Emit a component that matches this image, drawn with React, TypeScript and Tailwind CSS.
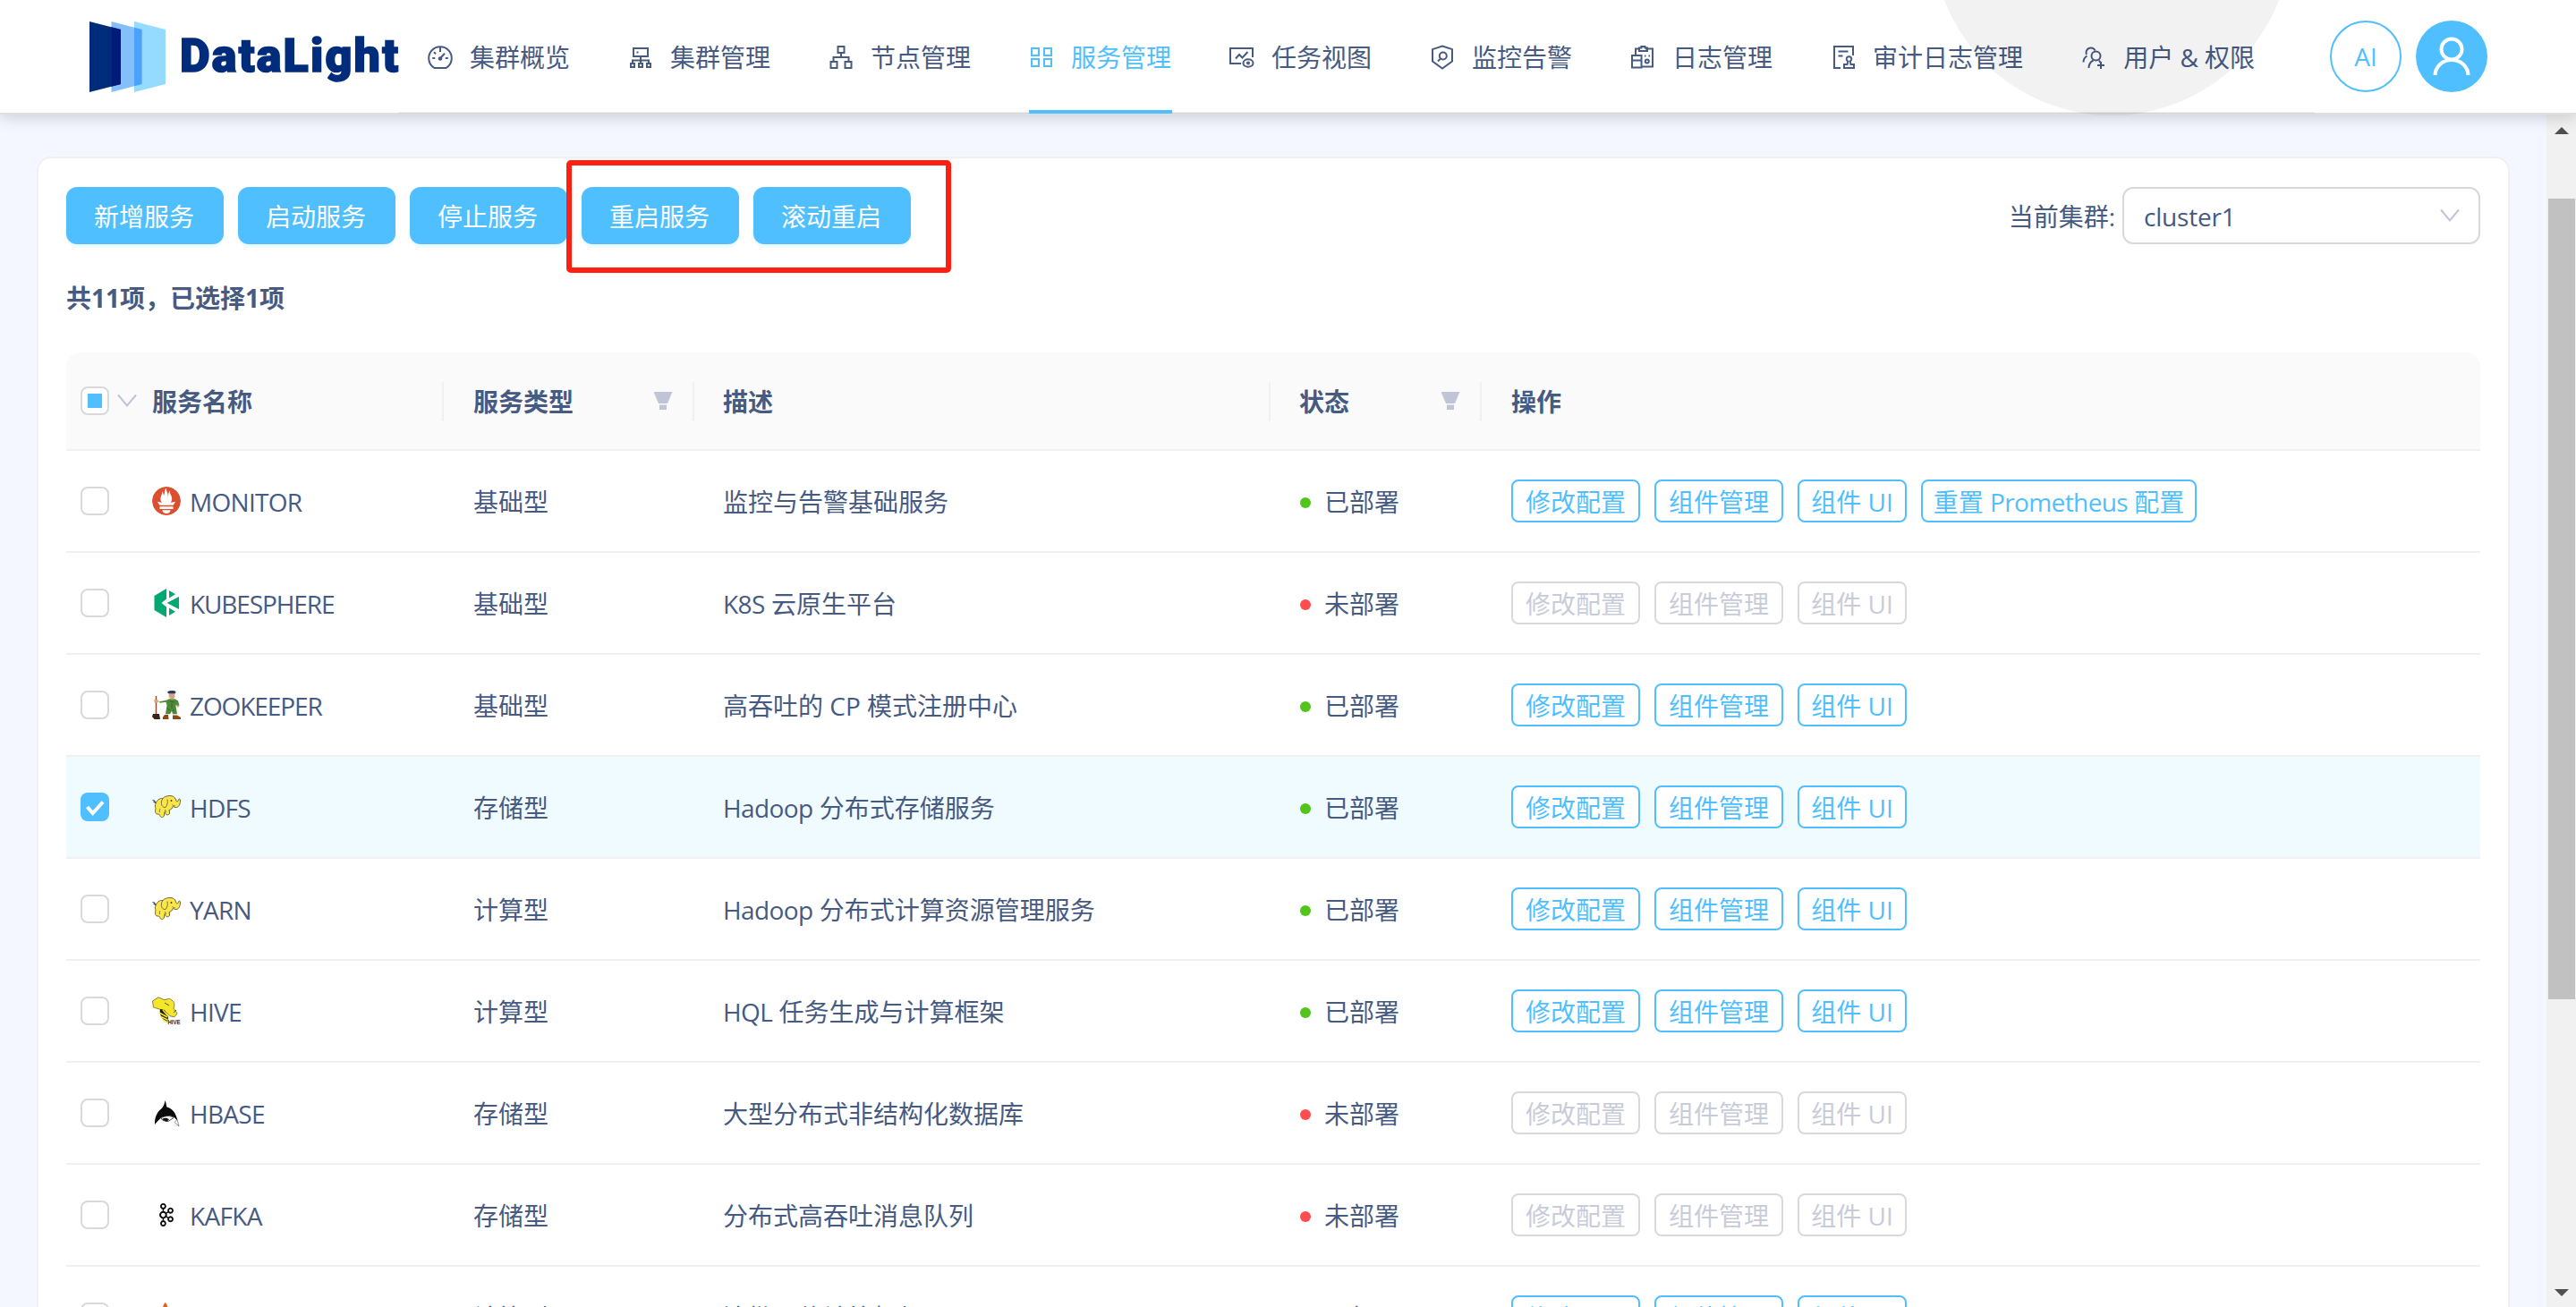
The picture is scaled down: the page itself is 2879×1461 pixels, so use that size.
import React from 'react';
import { SiApachekafka, SiPrometheus } from 'react-icons/si';

type IconProps = { children: React.ReactNode };

function NavIcon({ children }: IconProps) {
  return (
    <svg width="28" height="28" viewBox="0 0 28 28" fill="none" stroke="currentColor" strokeWidth="2" className="block shrink-0 overflow-visible">
      {children}
    </svg>
  );
}

const icons = {
  gauge: (
    <NavIcon>
      <path d="M7.500 26C3.500 23.500 1.200 19.500 1.200 15a12.800 12.800 0 0 1 25.600 0c0 4.500-2.300 8.500-6.300 11z" />
      <path d="M14 3v5M5.200 15h3M19.800 15h3M7 8.200l2 2M13.500 15.700l5.500-6" />
      <circle cx="14" cy="15.500" r="1.300" fill="currentColor" />
    </NavIcon>
  ),
  cluster: (
    <NavIcon>
      <path d="M6 4h16v9H6zM14 13v9M5 22v-4.500h18V22M9.500 8.500h2M3 21h4v4H3zM12 21h4v4h-4zM21 21h4v4h-4z" />
    </NavIcon>
  ),
  node: (
    <NavIcon>
      <path d="M10.500 2h7v7h-7zM14 9v5M5.500 19v-5h17v5M2.500 19h7v7h-7zM18.500 19h7v7h-7z" />
    </NavIcon>
  ),
  grid: (
    <NavIcon>
      <path d="M3 4h8v8H3zM17 4h8v8h-8zM3 16h8v8H3zM17 16h8v8h-8z" />
    </NavIcon>
  ),
  task: (
    <NavIcon>
      <path d="M26 14V4H1v17h12" />
      <path d="M7 15.500l4-4.500 3.500 3.500 6-6.500" />
      <ellipse cx="21" cy="20.500" rx="5.500" ry="4.300" />
      <circle cx="21" cy="20.500" r="1" fill="currentColor" />
    </NavIcon>
  ),
  shield: (
    <NavIcon>
      <path d="M14 1.500l11 3.600v13.400L14 26.500 3 18.500V5.100z" />
      <circle cx="14.800" cy="12.500" r="4" />
      <path d="M12 15.500l-3 3" />
    </NavIcon>
  ),
  log: (
    <NavIcon>
      <path d="M6 11V4.500h4M17 4.500h8V24.500h-13M10 3.500h2.500V2h4v1.500H19V7h-9zM2 12h10.500v13.500H2zM2 17.500h10.500M16 12.500h1.500M20.500 12.500h1.500" />
      <circle cx="18.800" cy="18.500" r="2" />
    </NavIcon>
  ),
  audit: (
    <NavIcon>
      <path d="M25 12V2H4v24h7M8.500 7.500h11M8.500 12.500h5" />
      <path d="M15 26h11v-4h-3.500l-.8-3.500a2.800 2.800 0 1 0-2.400 0L18.500 22H15z" />
    </NavIcon>
  ),
  users: (
    <NavIcon>
      <circle cx="16.500" cy="12.500" r="5" />
      <path d="M8.500 26c0-4.500 2-7 5-8.500M6 11a5 5 0 1 1 9.500-4.500M2.500 19.500c0-3 1.500-5.500 4-7M20 17.500l1.500 2.500M18 23h8M22 19v8" />
    </NavIcon>
  ),
};

const navItems: { label: string; icon: React.ReactNode; active?: boolean }[] = [
  { label: '集群概览', icon: icons.gauge },
  { label: '集群管理', icon: icons.cluster },
  { label: '节点管理', icon: icons.node },
  { label: '服务管理', icon: icons.grid, active: true },
  { label: '任务视图', icon: icons.task },
  { label: '监控告警', icon: icons.shield },
  { label: '日志管理', icon: icons.log },
  { label: '审计日志管理', icon: icons.audit },
  { label: '用户 & 权限', icon: icons.users },
];

function Logo() {
  return (
    <div className="flex w-[446px] shrink-0 items-center pl-[100px]">
      <svg width="85" height="79" viewBox="0 0 85 79" className="block shrink-0">
        <path d="M50 0l35 9v61L50 79z" fill="#95daff" />
        <path d="M24.500 0l34 9v61l-34 9z" fill="#82bffb" />
        <path d="M50 6.700l8.500 2.300v61L50 72.300z" fill="#4ba2fc" />
        <path d="M0 0l35 9v61L0 79z" fill="#002c7b" />
        <path d="M24.500 6.300L35 9v61l-10.500 2.700z" fill="#001c78" />
      </svg>
      <span className="ml-4 font-[Roboto] text-[52px] leading-none font-black tracking-[2.2px] text-[#002c7b] [-webkit-text-stroke:1.6px_#002c7b]">
        DataLight
      </span>
    </div>
  );
}

function Header() {
  return (
    <header className="relative z-10 flex h-32 shrink-0 border-b-2 border-[#dfdfdf] bg-white shadow-[0_4px_16px_rgba(0,0,0,0.16)]">
      <Logo />
      <nav className="flex h-[127px] w-[2140px] shrink-0 gap-16 border-b-2 border-black/5 pl-8">
        {navItems.map((n) => (
          <div
            key={n.label}
            className={
              n.active
                ? 'flex h-[127px] shrink-0 items-center gap-5 border-b-4 border-[#50bfff] pt-1 text-[#50bfff]'
                : 'flex h-[127px] shrink-0 items-center gap-5 border-b-4 border-transparent pt-1'
            }
          >
            {n.icon}
            <span className="mr-px -ml-px whitespace-nowrap">{n.label}</span>
          </div>
        ))}
      </nav>
      <div className="ml-[18px] flex items-center gap-4">
        <div className="flex size-20 items-center justify-center rounded-full border-2 border-[#50bfff] text-[#50bfff]">AI</div>
        <div className="flex size-20 items-center justify-center rounded-full bg-[#50bfff]">
          <svg width="80" height="80" viewBox="0 0 80 80" fill="none" stroke="#fff" strokeWidth="4">
            <circle cx="40" cy="32" r="11.500" />
            <path d="M21.500 61a18.500 17 0 0 1 37 0" />
          </svg>
        </div>
      </div>
      <div className="pointer-events-none absolute top-0 left-[2160px] h-[129px] w-[400px] overflow-hidden">
        <div className="absolute bottom-0 left-0 size-[400px] rounded-full bg-black/5" />
      </div>
    </header>
  );
}

function Checkbox({ checked }: { checked?: boolean }) {
  if (checked)
    return (
      <span className="flex size-8 items-center justify-center rounded-lg bg-[#50bfff]">
        <svg width="32" height="32" viewBox="0 0 32 32" fill="none" stroke="#fff" strokeWidth="4">
          <path d="M7.500 16l6.200 7L25 10.500" />
        </svg>
      </span>
    );
  return <span className="size-8 rounded-lg border-2 border-[#d9d9d9] bg-white" />;
}

function Chevron() {
  return (
    <svg width="22" height="16" viewBox="0 0 22 16" fill="none" stroke="#bfc5d6" strokeWidth="2" className="block shrink-0">
      <path d="M1 1.500l10 12 10-12" />
    </svg>
  );
}

function FilterIcon() {
  return (
    <svg width="22" height="20" viewBox="0 0 22 20" fill="#bfc5d6" className="mb-0.5 block shrink-0">
      <path d="M.5 0h21L16 13H6zM7 14.500h8V20H7z" />
    </svg>
  );
}

function Elephant() {
  return (
    <svg width="32" height="32" viewBox="0 0 32 32">
      <path
        d="M4 12.500C5 8.500 8.500 6 12 6.500 13.500 4.500 17 3.500 20 3.500c3.500 0 5.500 1.500 6.500 4.500.5 1.500 1 2.500 2 2 .8-.5.500-2 1.500-2.800.8-.5 1.500.3 1.500 1.800 0 3.500-1.500 7-4 7.500-2 .3-3.500-1-4.500-1-.5 2-1.500 3.500-4 4l.5 2.500c.3 1.500-.5 2.500-2 2.800-1.500.3-2.500-.8-3-2.300l-.5-1-.5 3.500c-.3 2-1.500 2.800-3 2.500-1-.3-1.500-1-1.800-2L7.500 24c-2 .5-3.500-.5-4-2.500-.3-1.500.5-2.500.5-4-.8-1.500-1-3.500 0-5z"
        fill="#fbe64a"
        stroke="#6a6440"
        strokeWidth="1"
      />
      <path
        d="M12 6.500c-1.500 2-2.500 5-1 8 1 1.500 2.500 2.500 4 2 1.500-2 3-4.500 2-9M8.500 22c-.5-2 0-3 .5-4M15.500 22l-1-3M22.500 13.500c1 1 2 1.500 3 1"
        fill="none"
        stroke="#6a6440"
        strokeWidth="0.900"
      />
      <path d="M.5 8.500l2 .5 1.500 3M1.500 10.500l2 .5" fill="none" stroke="#444" strokeWidth="1.200" />
      <circle cx="21.500" cy="9" r="0.900" fill="#333" />
    </svg>
  );
}

function Monitor() {
  return <SiPrometheus size={32} color="#db4f31" className="rounded-full bg-white" />;
}

function KubeSphere() {
  return (
    <svg width="32" height="32" viewBox="0 0 32 32" fill="#00a971">
      <path d="M16 0v11.500L10.500 16l5.500 4.500V32L2.500 24V8z" />
      <path d="M19 2l7 4.200-7 4.300zM30 9v14L16.500 16zM19 21.500l7 4.300-7 4.200z" />
    </svg>
  );
}

function ZooKeeper() {
  return (
    <svg width="32" height="32" viewBox="0 0 32 32">
      <path d="M4.500 6v20" stroke="#8a5230" strokeWidth="1.500" />
      <path d="M1 26h7l1 6H2.500L0 29z" fill="#3a2218" />
      <path d="M2 10.500l4-.5 2 2.500-5 1.500z" fill="#e0a477" />
      <path d="M8 12.300l8-1.500 3-1.500h6l4 2 1.500 5.500-2.500 1.500-1-3-.5 2 1.500 9h-5l-1-3.500-2 3.500h-5l1.500-10-1-3.500-7 1z" fill="#4f8a3a" />
      <path d="M19 2.500h6l.5 4.500-2 2.500h-2.500L18.500 6.500z" fill="#d9a27c" />
      <path d="M17 1.500C19-.3 25-.3 26.500 1L26 3.200h-8z" fill="#27405f" />
      <path d="M14 27h4l.5 5h-6.500v-2.500zM23 27.500h5l4 2.500v2h-9z" fill="#8c4a12" />
      <path d="M22 14v6M20 12l5 1M17 20l3 2M25 21l-2 2" stroke="#2f6326" strokeWidth="1" />
      <path d="M27.500 16.500l3 0-1.500 2.500z" fill="#e0a477" />
    </svg>
  );
}

function Hive() {
  return (
    <svg width="32" height="32" viewBox="0 0 32 32" className="overflow-visible">
      <path
        d="M.5 5L7 .8l7 3 4.500-1.500c2 0 3 1.500 4.500 2.500 2.500 2 2 6 1 8.500l4 5.500-3 4-5-1-4-4-7-3.500L1.500 12z"
        fill="#f5e52c"
        stroke="#6b6a20"
        strokeWidth="0.800"
      />
      <path d="M9 14l5 1 4 8-1 6-4-3c-3-3-5-7-4-12z" fill="#1b1a0c" />
      <path d="M8 18l9 5M9 22l8 4M12 15l5 6M12 26l5 2.500" stroke="#f5e52c" strokeWidth="1.500" />
      <path d="M14 7l5 3M24 18l3-3" stroke="#5b5a18" strokeWidth="1" />
      <text x="17.500" y="31" fontSize="8" fontWeight="900" fontFamily="Liberation Sans" textLength="14" lengthAdjust="spacingAndGlyphs" fill="#2c2a10">
        HIVE
      </text>
    </svg>
  );
}

function HBase() {
  return (
    <svg width="32" height="32" viewBox="0 0 32 32">
      <path
        d="M14.500 2c1.500 3 1 5.500 2 7.500 6.500 1.500 10.500 7.500 12 15.500l-2-2c-1-2-5-3.500-8-4l-8 2-5 5-2.500 3C2.500 22 5.500 15.500 9 12.500c3-2 4.500-5 5.500-10.500z"
        fill="#0b0b0b"
      />
      <path d="M10 22c4-3 10-3.500 14-.5l-6 4-6-1z" fill="#fff" stroke="#222" strokeWidth="0.800" />
      <path d="M11 23c3-2 6-1.500 8 .5l-3 2.500z" fill="#111" />
      <path d="M25 26.500l3-3 2 7.500-2-2z" fill="#fff" stroke="#777" strokeWidth="0.800" />
    </svg>
  );
}

function Kafka() {
  return <SiApachekafka size={26} color="#0b0b0b" className="m-[3px]" />;
}

function Spark() {
  return (
    <svg width="32" height="32" viewBox="0 0 32 32" fill="#e8601c">
      <path d="M14.500 0c2 1 3 5 3.500 9l9-3-4 9 5 8-9-2-6 8-2-10-8-4 8-4c.5-4 1.500-9 3.500-11z" />
    </svg>
  );
}

type Service = { name: string; type: string; desc: string; up: boolean; icon: React.ReactNode; checked?: boolean; reset?: boolean };

const services: Service[] = [
  { name: 'MONITOR', type: '基础型', desc: '监控与告警基础服务', up: true, icon: <Monitor />, reset: true },
  { name: 'KUBESPHERE', type: '基础型', desc: 'K8S 云原生平台', up: false, icon: <KubeSphere /> },
  { name: 'ZOOKEEPER', type: '基础型', desc: '高吞吐的 CP 模式注册中心', up: true, icon: <ZooKeeper /> },
  { name: 'HDFS', type: '存储型', desc: 'Hadoop 分布式存储服务', up: true, icon: <Elephant />, checked: true },
  { name: 'YARN', type: '计算型', desc: 'Hadoop 分布式计算资源管理服务', up: true, icon: <Elephant /> },
  { name: 'HIVE', type: '计算型', desc: 'HQL 任务生成与计算框架', up: true, icon: <Hive /> },
  { name: 'HBASE', type: '存储型', desc: '大型分布式非结构化数据库', up: false, icon: <HBase /> },
  { name: 'KAFKA', type: '存储型', desc: '分布式高吞吐消息队列', up: false, icon: <Kafka /> },
  { name: 'SPARK', type: '计算型', desc: '流批一体计算框架', up: true, icon: <Spark /> },
];

/** Sets Latin runs slightly tighter than the surrounding Chinese text. */
function Mixed({ text }: { text: string }) {
  return (
    <span className="whitespace-pre">
      {text.split(/([A-Za-z0-9]{3,})/).map((part, i) =>
        i % 2 ? (
          <span key={i} className="tracking-[-0.6px]">
            {part}
          </span>
        ) : (
          part
        ),
      )}
    </span>
  );
}

const COLS = 'grid grid-cols-[64px_358px_280px_644px_236px_1fr]';

function TableHead() {
  const cell = 'relative flex h-full items-center justify-between pr-6 pl-8 pt-0.5';
  const bar = 'h-11 w-0.5 absolute right-0 bg-[#f0f0f0]';
  return (
    <div className={`${COLS} h-[110px] items-center rounded-t-2xl border-b-2 border-[#f0f0f0] bg-[#fafafa] font-bold`}>
      <div className="flex items-center gap-[9px] pl-4">
        <span className="flex size-8 shrink-0 items-center justify-center rounded-lg border-2 border-[#d9d9d9] bg-white">
          <span className="size-4 bg-[#50bfff]" />
        </span>
        <Chevron />
      </div>
      <div className={cell}>
        服务名称
        <span className={bar} />
      </div>
      <div className={cell}>
        <span className="pl-px">服务类型</span>
        <FilterIcon />
        <span className={bar} />
      </div>
      <div className={cell}>
        描述
        <span className={bar} />
      </div>
      <div className={cell}>
        状态
        <FilterIcon />
        <span className={bar} />
      </div>
      <div className={cell}>
        <span className="pl-px">操作</span>
      </div>
    </div>
  );
}

function Action({ label, width, up }: { label: string; width: string; up: boolean }) {
  return (
    <span
      className={`${width} ${
        up ? 'border-[#50bfff] text-[#50bfff]' : 'border-[#d9d9d9] text-[#c8ccd9]'
      } flex h-12 items-center justify-center rounded-lg border-2 bg-white pt-0.5 whitespace-nowrap`}
    >
      <Mixed text={label} />
    </span>
  );
}

function Row({ s }: { s: Service }) {
  return (
    <div className={`${COLS} h-[114px] shrink-0 items-center border-b-2 border-[#f0f0f0] ${s.checked ? 'bg-[#f0fbff]' : ''}`}>
      <div className="flex pl-4">
        <Checkbox checked={s.checked} />
      </div>
      <div className="flex items-center gap-2 pl-8">
        <span className="size-8 shrink-0">{s.icon}</span>
        <span className={s.name.length > 8 ? 'pt-0.5 pl-0.5 tracking-[-1.1px]' : 'pt-0.5 pl-0.5 tracking-[-0.7px]'}>{s.name}</span>
      </div>
      <div className="pt-0.5 pl-[33px]">{s.type}</div>
      <div className="pt-0.5 pl-8">
        <Mixed text={s.desc} />
      </div>
      <div className="flex items-center gap-[15px] pt-0.5 pl-[33px]">
        <span className={s.up ? 'mt-0.5 size-3 rounded-full bg-[#52c41a]' : 'mt-0.5 size-3 rounded-full bg-[#ff4d4f]'} />
        {s.up ? '已部署' : '未部署'}
      </div>
      <div className="flex gap-4 pl-[33px]">
        <Action label="修改配置" width="w-36" up={s.up} />
        <Action label="组件管理" width="w-36" up={s.up} />
        <Action label="组件 UI" width="w-[122px]" up={s.up} />
        {s.reset && <Action label="重置 Prometheus 配置" width="w-[308px]" up={s.up} />}
      </div>
    </div>
  );
}

const toolbar = ['新增服务', '启动服务', '停止服务', '重启服务', '滚动重启'];

export default function App() {
  return (
    <div className="flex h-[1461px] w-[2879px] flex-col overflow-hidden bg-[#f4f7ff] font-['Open_Sans','Noto_Sans_CJK_SC',sans-serif] text-[28px] leading-[44px] text-[#465a82]">
      <Header />
      <div className="flex min-h-0 flex-1">
        <main className="min-w-0 flex-1 overflow-hidden pt-[47px] pr-[41px] pl-[41px]">
          <section className="relative h-[1500px] rounded-2xl border-2 border-[#f0f0f0] bg-white px-[31px] pt-8">
            <div className="flex h-16 items-center justify-between">
              <div className="flex gap-4">
                {toolbar.map((t) => (
                  <button key={t} className="h-16 w-44 rounded-xl bg-[#50bfff] pt-0.5 pr-0.5 text-white shadow-[0_4px_0_#f0fbff]">
                    {t}
                  </button>
                ))}
              </div>
              <div className="flex items-center gap-2">
                <span className="pt-0.5">当前集群:</span>
                <div className="flex h-16 w-[400px] items-center justify-between rounded-xl border-2 border-[#d9d9d9] pr-[21px] pl-[22px]">
                  <span className="pt-0.5 tracking-[-0.2px]">cluster1</span>
                  <Chevron />
                </div>
              </div>
            </div>
            <div className="mt-[38px] h-11 font-bold">共11项，已选择1项</div>
            <div className="mt-[39px]">
              <TableHead />
              {services.map((s) => (
                <Row key={s.name} s={s} />
              ))}
            </div>
            <div className="pointer-events-none absolute top-[2px] left-[590px] h-[126px] w-[430px] rounded-[5px] border-[6px] border-[#ff2012]" />
          </section>
        </main>
        <div className="flex w-[33px] shrink-0 flex-col items-center justify-between bg-[#f1f1f1] pt-3.5 pb-3">
          <svg width="16" height="8" viewBox="0 0 16 8" className="shrink-0 fill-[#505050]">
            <path d="M0 8l8-8 8 8z" />
          </svg>
          <div className="mt-[72px] mb-auto h-[895px] w-[30px] bg-[#c1c1c1]" />
          <svg width="16" height="8" viewBox="0 0 16 8" className="shrink-0 fill-[#505050]">
            <path d="M0 0l8 8 8-8z" />
          </svg>
        </div>
      </div>
    </div>
  );
}
